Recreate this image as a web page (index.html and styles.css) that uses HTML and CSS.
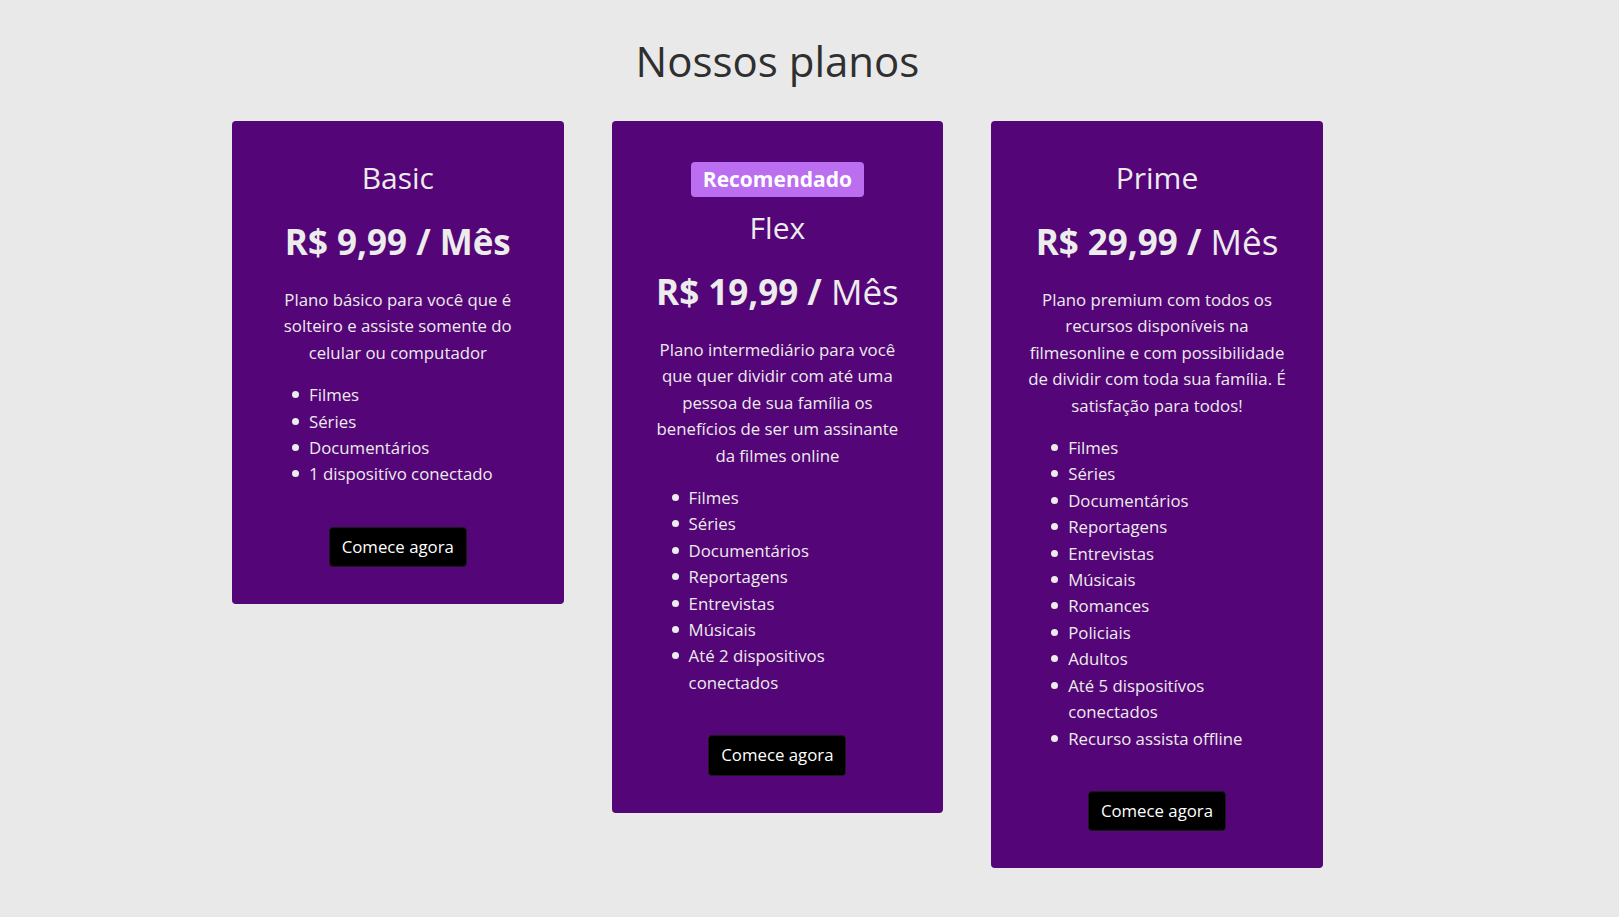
FILE: index.html
```html
<!DOCTYPE html>
<html lang="pt-BR">
<head>
<meta charset="utf-8">
<title>Nossos planos</title>
<link rel="stylesheet" href="styles.css">
</head>
<body>
<div class="viewport">
  <main class="page">
    <h1 class="page-title">Nossos planos</h1>
    <section class="plans">
      <article class="plan">
        <h2 class="plan-name">Basic</h2>
        <p class="plan-price"><strong>R$ 9,99 / Mês</strong></p>
        <p class="plan-desc">Plano básico para você que é solteiro e assiste somente do celular ou computador</p>
        <ul class="plan-features">
          <li>Filmes</li>
          <li>Séries</li>
          <li>Documentários</li>
          <li>1 dispositívo conectado</li>
        </ul>
        <div class="plan-action"><a class="btn" href="#">Comece agora</a></div>
      </article>
      <article class="plan">
        <div class="badge-row"><span class="badge">Recomendado</span></div>
        <h2 class="plan-name">Flex</h2>
        <p class="plan-price"><strong>R$ 19,99 /</strong> Mês</p>
        <p class="plan-desc">Plano intermediário para você que quer dividir com até uma pessoa de sua família os benefícios de ser um assinante da filmes online</p>
        <ul class="plan-features">
          <li>Filmes</li>
          <li>Séries</li>
          <li>Documentários</li>
          <li>Reportagens</li>
          <li>Entrevistas</li>
          <li>Músicais</li>
          <li>Até 2 dispositivos conectados</li>
        </ul>
        <div class="plan-action"><a class="btn" href="#">Comece agora</a></div>
      </article>
      <article class="plan">
        <h2 class="plan-name">Prime</h2>
        <p class="plan-price"><strong>R$ 29,99 /</strong> Mês</p>
        <p class="plan-desc">Plano premium com todos os recursos disponíveis na filmesonline e com possibilidade de dividir com toda sua família. É satisfação para todos!</p>
        <ul class="plan-features">
          <li>Filmes</li>
          <li>Séries</li>
          <li>Documentários</li>
          <li>Reportagens</li>
          <li>Entrevistas</li>
          <li>Músicais</li>
          <li>Romances</li>
          <li>Policiais</li>
          <li>Adultos</li>
          <li>Até 5 dispositívos conectados</li>
          <li>Recurso assista offline</li>
        </ul>
        <div class="plan-action"><a class="btn" href="#">Comece agora</a></div>
      </article>
    </section>
  </main>
</div>
</body>
</html>
```
FILE: styles.css
```css
* { box-sizing: border-box; }

html, body {
  margin: 0;
  padding: 0;
  background: #e9e9e9;
}

body {
  font-family: "Open Sans", "Noto Sans", Arial, sans-serif;
  color: #333;
}

.viewport {
  padding-right: 64px;
}

.page {
  width: 1091px;
  margin: 0 auto;
}

.page-title {
  margin: 34px 0 34px;
  font-size: 42px;
  line-height: 53px;
  font-weight: 400;
  text-align: center;
  color: #2f2f2f;
}

.plans {
  display: flex;
  align-items: flex-start;
  gap: 48px;
}

.plan {
  flex: 0 0 331.6px;
  background: #540577;
  border-radius: 4px;
  padding: 38px 37px 37px;
  color: #ececec;
  text-align: center;
}

.badge-row {
  margin: 3px 0 12px;
  line-height: 0;
}

.badge {
  display: inline-block;
  height: 35px;
  line-height: 35px;
  padding: 0 12px;
  background: #bb6ef0;
  color: #fff;
  border-radius: 4px;
  font-size: 21px;
  font-weight: 700;
}

.plan-name {
  margin: 0;
  font-size: 30px;
  line-height: 38px;
  font-weight: 400;
}

.plan-price {
  margin: 24px 0 0;
  font-size: 35px;
  line-height: 42px;
  font-weight: 400;
}

.plan-price strong {
  font-weight: 700;
}

.plan-desc {
  margin: 24px 0 16px;
  font-size: 16.8px;
  line-height: 26.4px;
}

.plan-features {
  margin: 0 0 16px;
  padding: 0 0 0 40px;
  list-style: none;
  text-align: left;
  font-size: 16.8px;
  line-height: 26.4px;
}

.plan-features li {
  position: relative;
}

.plan-features li::before {
  content: "";
  position: absolute;
  left: -17px;
  top: 9px;
  width: 7px;
  height: 7px;
  border-radius: 50%;
  background: #ececec;
}

.plan-action {
  padding-top: 23px;
}

.btn {
  display: inline-block;
  padding: 6px 12px;
  font-size: 16.8px;
  line-height: 26.4px;
  color: #fff;
  background: #000;
  border: 1px solid #1a1a1a;
  border-radius: 4px;
  text-decoration: none;
}
```
